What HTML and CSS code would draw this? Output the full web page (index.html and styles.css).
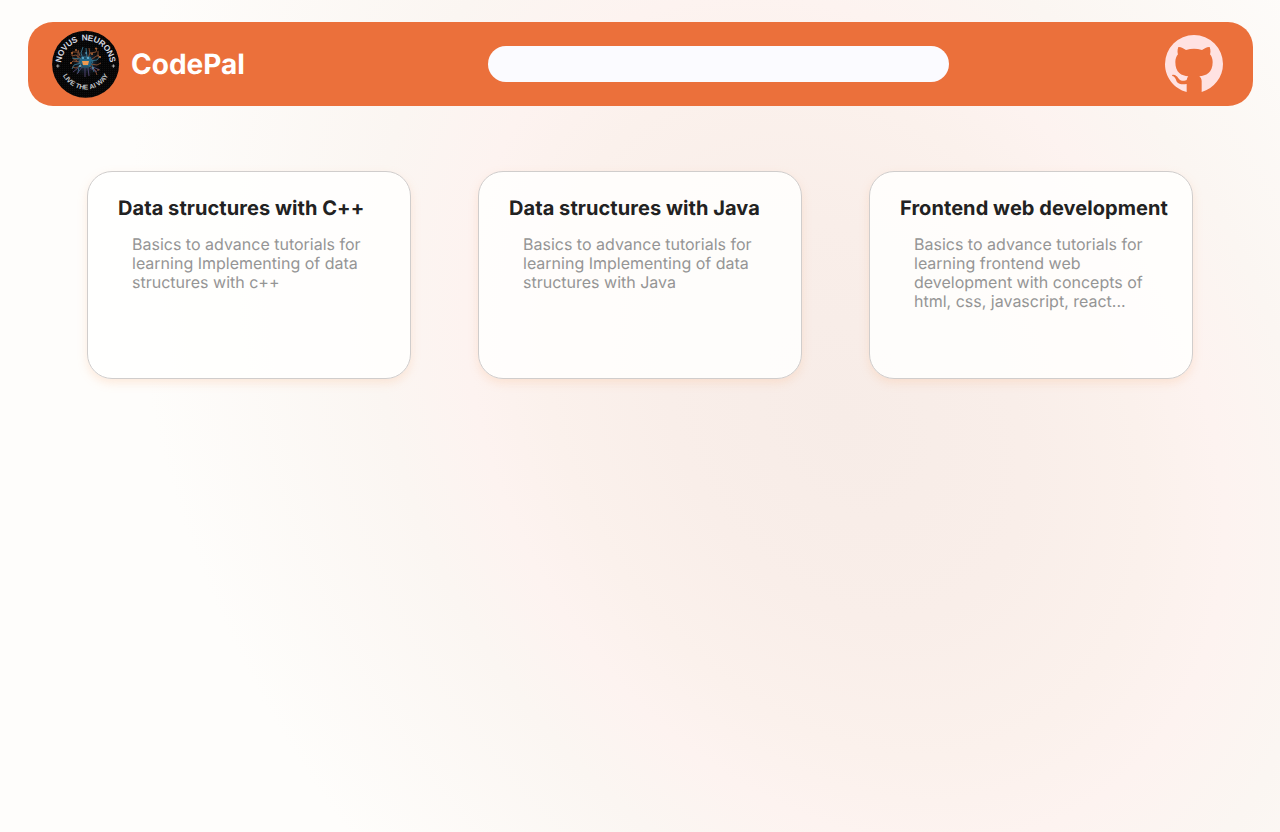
FILE: index.html
```html
<!DOCTYPE html>
<html lang="en">
<head>
<meta charset="utf-8">
<title>CodePal</title>
<link rel="stylesheet" href="styles.css">
</head>
<body>
<div class="backdrop"><div class="glow"></div></div>
<header class="topbar">
  <div class="brand">
    <svg class="logo" viewBox="0 0 68 68">
      <defs>
        <path id="arc-top" d="M9.1 35 A24.5 24.5 0 0 1 58.1 35"/>
        <path id="arc-bottom" d="M8.1 34 A25.5 25.5 0 0 0 59.1 34"/>
        <pattern id="mesh" width="2" height="2" patternUnits="userSpaceOnUse"><rect width="2" height="2" fill="#050505"/><rect width="1" height="1" fill="#0f0f10"/></pattern>
        <radialGradient id="core"><stop offset="0" stop-color="#247eab" stop-opacity=".7"/><stop offset=".5" stop-color="#263c56" stop-opacity=".5"/><stop offset="1" stop-color="#111" stop-opacity="0"/></radialGradient>
      </defs>
      <circle cx="33.6" cy="34.2" r="33.5" fill="url(#mesh)"/>
      <circle cx="33.8" cy="32" r="16" fill="url(#core)"/>
      <g fill="none" stroke-width=".9">
        <path stroke="#8f5232" d="M29 29l-5-4-4 1v-4M28 26l-2-6M36 28l2-5 6-1 1-4M38 24l-1-6M40 29l6-4 2 2M28 32l-7-1-3 3M25 31l-4-3M39 34l6 1 4-2M30 35l-6 3-4-1M38 36l5 4 2 5M20 22h6v7h-5M46 21v6h3"/>
        <path stroke="#367590" d="M31 29l-2-6 2-6M35 28l-1-10M29 33l-7 2-2 4M27 36l-1 7M38 31l7-1 3-4M40 35l2 7M28 29l-8-1M30 27h8l3 5-4 5h-7l-3-5z"/>
        <path stroke="#544676" d="M30 37l-5 7M38 38l7 4M33 38v9M41 37l7 3M36 38l1 8M26 38l-5 4"/>
      </g>
      <path d="M29 27l4 2 5-2 2 4-2 5h-7l-3-4z" fill="#226687"/>
      <path d="M30 31h7l-1 4h-5z" fill="#ef9a50"/>
      <g fill="#b86b37"><circle cx="20" cy="23" r="1"/><circle cx="24" cy="20" r="1"/><circle cx="44" cy="18.5" r="1"/><circle cx="48" cy="27" r="1"/><circle cx="19" cy="33" r="1"/><circle cx="46" cy="40" r=".8"/><circle cx="40" cy="24" r="1"/></g>
      <g fill="#66b6d9"><circle cx="31" cy="28" r="1"/><circle cx="36" cy="28" r="1.1"/><circle cx="28" cy="36" r="1"/><circle cx="41" cy="38" r=".8"/><circle cx="34" cy="23" r=".8"/></g>
      <text class="logo-name"><textPath href="#arc-top" startOffset="50%" text-anchor="middle" textLength="72">NOVUS&#160; NEURONS</textPath></text>
      <text class="logo-motto"><textPath href="#arc-bottom" startOffset="50%" text-anchor="middle" textLength="56">LIVE THE AI WAY</textPath></text>
      <path d="M5.8 34.3v3.4M4.1 36h3.4M61.4 34.3v3.4M59.7 36h3.4" stroke="#ddd" stroke-width=".7"/>
    </svg>
    <span class="brand-name">CodePal</span>
  </div>
  <input class="search" type="text" aria-label="Search">
  <a class="github" href="#" aria-label="GitHub">
    <svg viewBox="0 0 174 174"><path fill="#ffe2e2" d="M65 171C27 161 0 127 0 87a87 87 0 0 1 174 0c0 40-27 73-64 84v-32c0-7-3-12-7-15 20-2 40-10 40-43 0-9-3-17-8-23 1-3 3-11-1-22-7-1-16 4-23 9a84 84 0 0 0-48 0c-7-5-16-10-23-9-4 11-2 19-1 22-5 6-8 14-8 23 0 33 19 41 39 43-2 2-4 6-5 11-5 2-18 6-26-7-2-3-7-9-14-9-7 0-3 4 0 5 4 2 8 10 9 13 2 5 8 14 31 10z"/></svg>
  </a>
</header>
<main class="cards">
  <article class="card">
    <h2>Data structures with C++</h2>
    <p>Basics to advance tutorials for learning Implementing of data structures with c++</p>
  </article>
  <article class="card">
    <h2>Data structures with Java</h2>
    <p>Basics to advance tutorials for learning Implementing of data structures with Java</p>
  </article>
  <article class="card">
    <h2>Frontend web development</h2>
    <p>Basics to advance tutorials for learning frontend web development with concepts of html, css, javascript, react...</p>
  </article>
</main>
</body>
</html>
```
FILE: styles.css
```css
* { box-sizing: border-box; }
body {
  margin: 0;
  height: 832px;
  padding: 22px 27px 0 28px;
  position: relative;
  overflow: hidden;
  background: #fefdfb;
  font-family: Inter, "Liberation Sans", sans-serif;
  text-rendering: geometricPrecision;
}
.backdrop {
  position: absolute;
  inset: 0;
  z-index: -1;
  overflow: hidden;
}
.glow {
  position: absolute;
  left: -15px;
  top: -225px;
  width: 1720px;
  height: 1290px;
  transform: rotate(57deg);
  background: radial-gradient(closest-side, #f7ece7 0%, #f9eee9 25%, #fbf1ec 42%, #fdf3f0 53%, #fbf6f2 66%, #fefdfb 100%);
}
.topbar {
  display: flex;
  align-items: center;
  justify-content: space-between;
  height: 84px;
  padding: 0 30px 0 24px;
  border-radius: 25px;
  background: #eb703b;
}
.brand {
  display: flex;
  align-items: center;
  gap: 11px;
  width: 436px;
}
.logo { width: 68px; height: 68px; }
.logo-name { font: bold 8.4px "Liberation Sans", sans-serif; fill: #d6d9e0; }
.logo-motto { font: bold 6.8px "Liberation Sans", sans-serif; fill: #c4c8cc; }
.brand-name { font-size: 28px; font-weight: 700; line-height: 34px; color: #fff; }
.search {
  width: 461px;
  height: 36px;
  margin-right: 216px;
  padding: 0 18px;
  border: 0;
  border-radius: 18px;
  background: #fbfbff;
}
.github { width: 58px; height: 58px; }
.github svg { display: block; width: 58px; height: 58px; }
.cards {
  display: grid;
  grid-template-columns: repeat(3, 324px);
  gap: 67px;
  padding: 65px 0 0 59px;
}
.card {
  height: 208px;
  padding: 24px 20px 0 30px;
  border: 1px solid #d0cdcc;
  border-radius: 25px;
  background: rgba(255, 255, 254, 0.85);
  box-shadow: 0 4px 10px rgba(250, 182, 137, 0.26);
}
.card h2 {
  margin: 0;
  font-size: 20px;
  font-weight: 700;
  line-height: 24px;
  letter-spacing: 0.06px;
  white-space: nowrap;
  color: #222;
}
.card p {
  width: 240px;
  margin: 15px 0 0 14px;
  font-size: 16px;
  line-height: 19px;
  font-weight: 400;
  color: #959595;
}
```
